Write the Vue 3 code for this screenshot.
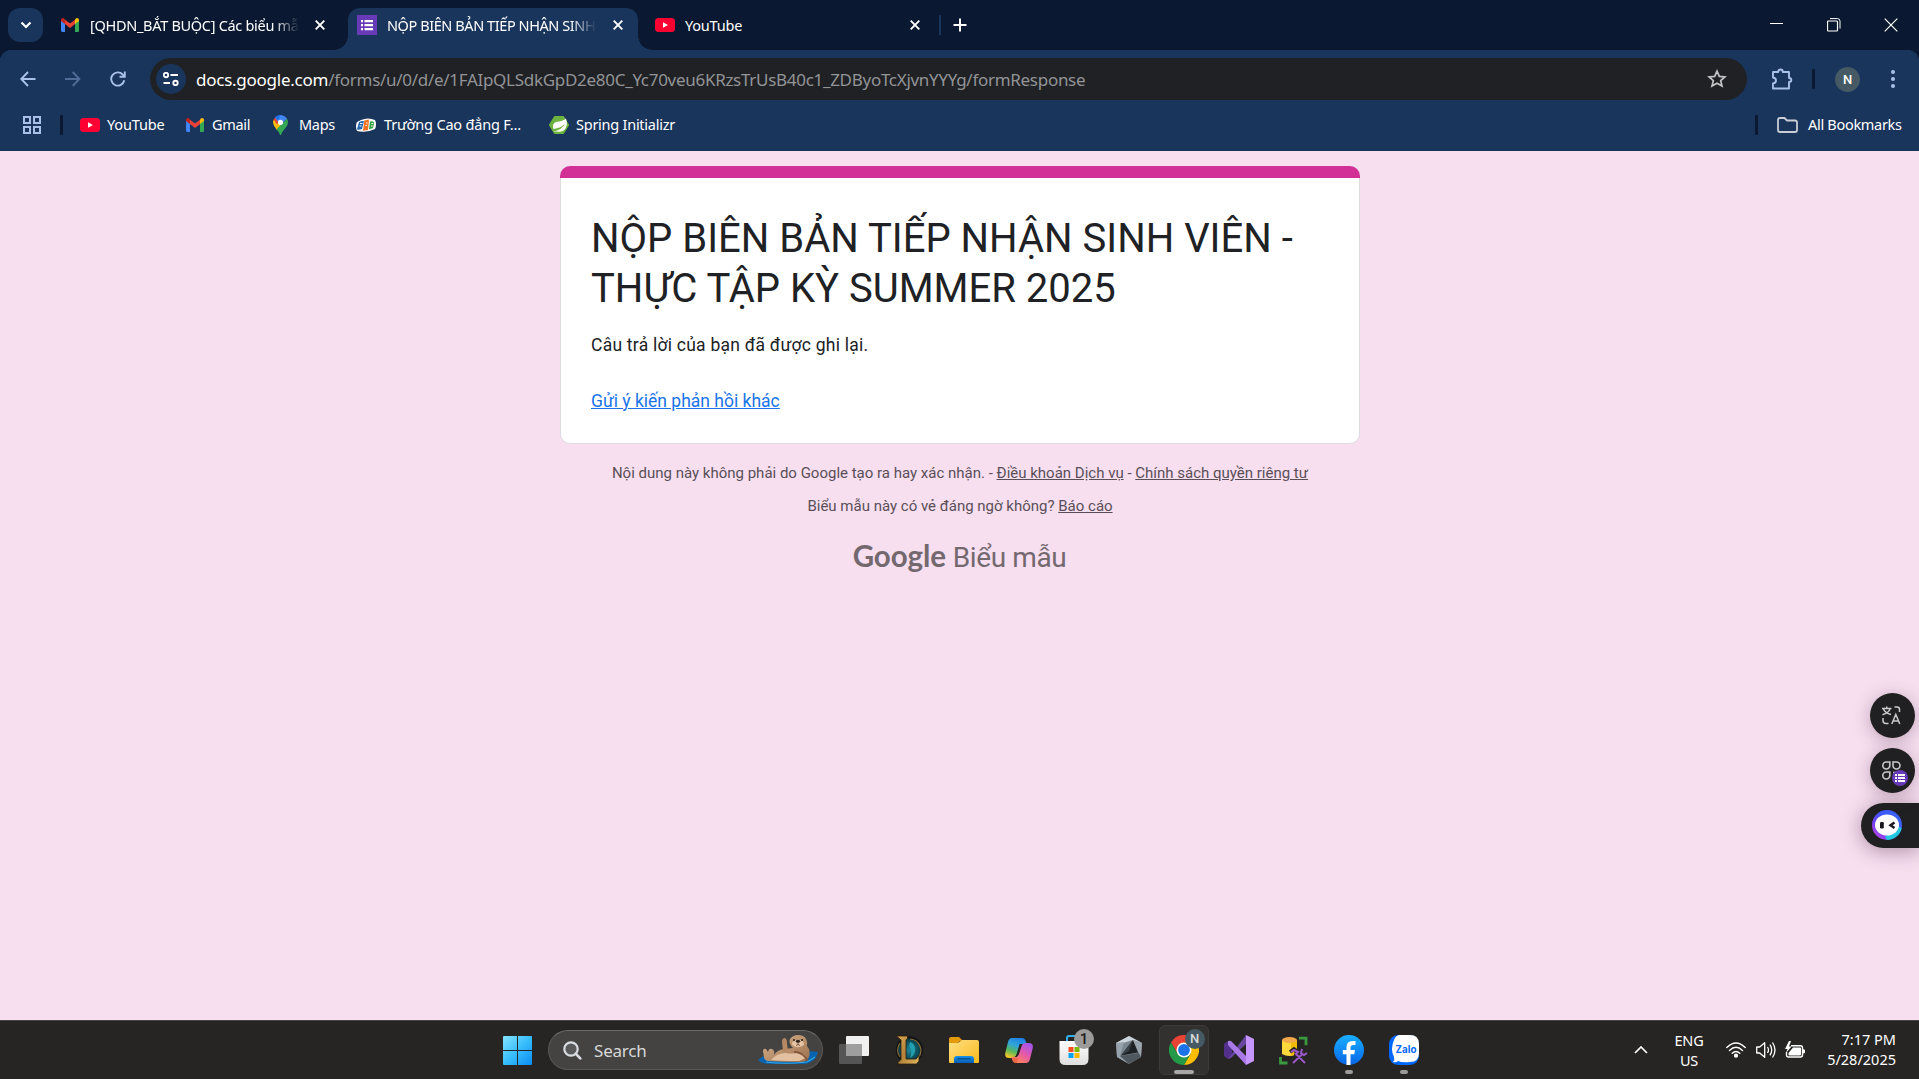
<script setup>
const pinned = ['taskview', 'league', 'folder', 'copilot', 'store', 'cube', 'chrome', 'vs', 'sql', 'facebook', 'zalo']
</script>

<template>
  <div class="screen">
    <!-- shared artwork -->
    <svg class="defs" width="0" height="0" aria-hidden="true">
      <defs>
        <symbol id="gmail" viewBox="0 0 18 14">
          <path d="M0 2v10.600C0 13.400.6 14 1.400 14H4V5.500L9 9.200l5-3.700V14h2.600c.8 0 1.400-.6 1.400-1.400V2L9 5.500z" fill="#4285f4" />
          <path d="M14 5v9h2.600c.8 0 1.400-.6 1.400-1.400V3z" fill="#34a853" />
          <path d="M4 1.700l5 3.800 5-3.800v4.400l-5 3.800-5-3.800z" fill="#ea4335" />
          <path d="M14 1.700v4.400l4-3V2c0-1.800-2-2.600-3.300-1.500z" fill="#fbbc04" />
          <path d="M4 1.700v4.400L0 3.100V2C0 .2 2-.6 3.300.5z" fill="#c5221f" />
        </symbol>
        <symbol id="youtube" viewBox="0 0 20 14">
          <rect width="20" height="14" rx="3.500" fill="#ff0033" />
          <path d="M8 4.200v5.600L12.900 7z" fill="#fff" />
        </symbol>
        <symbol id="forms" viewBox="0 0 20 20">
          <rect width="20" height="20" fill="#673ab7" />
          <path d="M4 5h2v2.200H4zM7.500 5H16v2.200H7.500zM4 9h2v2.200H4zM7.500 9H16v2.200H7.500zM4 13h2v2.200H4zM7.500 13H16v2.200H7.500z" fill="#fff" />
        </symbol>
        <symbol id="close" viewBox="0 0 10 10">
          <path d="M.7.700l8.600 8.600M9.300.700L.7 9.300" stroke="#fff" stroke-width="1.900" fill="none" />
        </symbol>
        <linearGradient id="win" x1="0" y1="0" x2="1" y2="1"><stop offset="0" stop-color="#86e4ff" /><stop offset=".5" stop-color="#38bdfb" /><stop offset="1" stop-color="#0a8df0" /></linearGradient>
        <linearGradient id="ring" x1="0" y1="1" x2="1" y2="0"><stop offset="0" stop-color="#d84bd8" /><stop offset=".3" stop-color="#7b3ff5" /><stop offset=".6" stop-color="#3a5bf6" /><stop offset="1" stop-color="#3f62ff" /></linearGradient>
        <linearGradient id="yellow" x1="0" y1="0" x2="1" y2="1"><stop offset="0" stop-color="#ffe084" /><stop offset="1" stop-color="#f9b91c" /></linearGradient>
        <linearGradient id="blue" x1="0" y1="0" x2="0" y2="1"><stop offset="0" stop-color="#1492e8" /><stop offset="1" stop-color="#0a5cb4" /></linearGradient>
        <linearGradient id="copA" x1=".7" y1="0" x2=".3" y2="1"><stop offset="0" stop-color="#1f7fe8" /><stop offset=".4" stop-color="#2fa4d8" /><stop offset=".7" stop-color="#56b95a" /><stop offset="1" stop-color="#f0c52a" /></linearGradient>
        <linearGradient id="copB" x1=".8" y1="0" x2=".2" y2="1"><stop offset="0" stop-color="#a255f0" /><stop offset=".5" stop-color="#e65aa8" /><stop offset="1" stop-color="#ff8a4c" /></linearGradient>
        <linearGradient id="gold" x1="0" y1="0" x2="1" y2="1"><stop offset="0" stop-color="#d9aa52" /><stop offset=".5" stop-color="#b3823a" /><stop offset="1" stop-color="#e0b65c" /></linearGradient>
        <radialGradient id="orb"><stop offset="0" stop-color="#1e8798" /><stop offset="1" stop-color="#07343f" /></radialGradient>
        <linearGradient id="fb" x1="0" y1="0" x2="0" y2="1"><stop offset="0" stop-color="#19afff" /><stop offset="1" stop-color="#0866e8" /></linearGradient>
        <linearGradient id="fur" x1="0" y1="0" x2="1" y2="1"><stop offset="0" stop-color="#dcb590" /><stop offset="1" stop-color="#9a6e4c" /></linearGradient>
        <linearGradient id="bag" x1="0" y1="0" x2="0" y2="1"><stop offset="0" stop-color="#ffffff" /><stop offset="1" stop-color="#dedede" /></linearGradient>
      </defs>
    </svg>

    <header class="tabs">
      <button class="tabsearch"><svg width="12" height="8" viewBox="0 0 12 8"><path d="M1.500 1.500L6 6l4.500-4.500" fill="none" stroke="#fff" stroke-width="2.200" /></svg></button>
      <div class="tab mail">
        <svg class="fav" width="18" height="14"><use href="#gmail" /></svg>
        <span class="ttl">[QHDN_BẮT BUỘC] Các biểu mẫu</span>
        <svg class="x" width="10" height="10"><use href="#close" /></svg>
      </div>
      <div class="tab active">
        <svg class="fav" width="20" height="20"><use href="#forms" /></svg>
        <span class="ttl">NỘP BIÊN BẢN TIẾP NHẬN SINH VIÊN</span>
        <svg class="x" width="10" height="10"><use href="#close" /></svg>
      </div>
      <div class="tab yt">
        <svg class="fav" width="20" height="14"><use href="#youtube" /></svg>
        <span class="ttl">YouTube</span>
        <svg class="x" width="10" height="10"><use href="#close" /></svg>
      </div>
      <i class="tabdiv"></i>
      <svg class="plus" width="14" height="14" viewBox="0 0 14 14"><path d="M7 .5v13M.5 7h13" stroke="#fff" stroke-width="2" /></svg>
      <div class="winbtns">
        <svg width="14" height="14" viewBox="0 0 14 14"><path d="M0 5.500h13" stroke="#fff" /></svg>
        <svg width="14" height="14" viewBox="0 0 14 14" fill="none" stroke="#fff"><rect x=".5" y="3" width="10" height="10" rx="1" stroke-width="1.200" /><path d="M3 .6h7.500q2.500 0 2.500 2.500v7.500" /></svg>
        <svg width="14" height="14" viewBox="0 0 14 14"><path d="M.7.700l12.600 12.600M13.300.700L.7 13.300" stroke="#fff" stroke-width="1.200" /></svg>
      </div>
    </header>

    <section class="frame">
      <div class="toolbar">
        <svg width="16" height="16" viewBox="0 0 16 16" fill="none" stroke="#a9c1e8" stroke-width="1.900"><path d="M15.500 8H1.500M8 1L1.300 8 8 15" /></svg>
        <svg width="16" height="16" viewBox="0 0 16 16" fill="none" stroke="#4f6b96" stroke-width="1.900"><path d="M0 8h14M7.700 1l6.700 7-6.700 7" /></svg>
        <svg width="17" height="16" viewBox="0 0 17 16" fill="none" stroke="#a9c1e8" stroke-width="1.900"><path d="M14.300 9.300A6.600 6.600 0 1 1 12.700 3.500L14.500 5.300" /><path d="M14.800.5v5.300H9.500" /></svg>
        <div class="omnibox">
          <span class="chip"><svg width="16" height="14" viewBox="0 0 16 14" fill="none" stroke="#fff" stroke-width="1.900"><circle cx="3" cy="3" r="2.200" /><path d="M7.500 3H15M.5 11h6.500" /><circle cx="12.500" cy="11" r="2.200" /></svg></span>
          <span class="url"><b>docs.google.com</b><span class="path">/forms/u/0/d/e/1FAIpQLSdkGpD2e80C_Yc70veu6KRzsTrUsB40c1_ZDByoTcXjvnYYYg/formResponse</span></span>
          <svg class="star" width="20" height="20" viewBox="0 0 20 20"><path d="M10 2.200l2.300 5.200 5.600.500-4.200 3.700 1.300 5.500-5-2.900-5 2.900 1.300-5.500-4.200-3.700 5.600-.500z" fill="none" stroke="#c3c4c6" stroke-width="1.700" /></svg>
        </div>
        <svg class="puzzle" width="22" height="22" viewBox="0 0 22 22"><path d="M2 4h5.200q0-2.500 2.300-2.500T11.800 4H18v6q2.300 0 2.300 2T18 14v6.500H2v-5q3-.3 3-2.900T2 9.500z" fill="none" stroke="#a9c1e8" stroke-width="1.900" stroke-linejoin="round" /></svg>
        <i class="bar"></i>
        <span class="avatar">N</span>
        <svg class="dots" width="4" height="18" viewBox="0 0 4 18" fill="#a9c1e8"><circle cx="2" cy="2" r="2" /><circle cx="2" cy="9" r="2" /><circle cx="2" cy="16" r="2" /></svg>
      </div>
      <div class="bookmarks">
        <svg class="apps" width="18" height="18" viewBox="0 0 18 18" fill="none" stroke="#a9c1e8" stroke-width="2"><path d="M1 1h6v6H1zM11 1h6v6h-6zM1 11h6v6H1zM11 11h6v6h-6z" /></svg>
        <i class="bar"></i>
        <span class="bm b1"><svg width="20" height="14"><use href="#youtube" /></svg><span>YouTube</span></span>
        <span class="bm b2"><svg width="18" height="14"><use href="#gmail" /></svg><span>Gmail</span></span>
        <span class="bm b3"><svg width="15" height="20" viewBox="0 0 15 20"><path d="M1 10.700Q-.8 7 .8 4.400L5 7.500l5 .5-6.200 7z" fill="#fbbc04" /><path d="M3.500 14.400L14 3.500c1.800 4 .8 6.700-1.500 9.500C10 16.200 9 17 8 20H7q-.5-3-3.500-5.600z" fill="#34a853" /><path d="M.7 4.600Q1.200 3.300 2.300 2.200L7 6 4 9.500z" fill="#ea4335" /><path d="M2 2.600Q4 0 7.500 0T14 3.500L7.500 10z" fill="#4285f4" /><path d="M2 2.600Q4 0 7.500 0L5 5z" fill="#1a73e8" /><circle cx="7.500" cy="7.300" r="2.600" fill="#fff" /></svg><span>Maps</span></span>
        <span class="bm b4"><svg width="20" height="14" viewBox="0 0 20 14"><path d="M5 2Q12-1 19 2q2 4 0 9-8 4-18 2-2-5 0-9z" fill="#fff" /><path d="M3 4q3-1.500 5-1l-2 8q-3 1-5 .5z" fill="#2265ad" /><path d="M8.300 2.500L13 1.500 12 12l-5 .8z" fill="#f37021" /><path d="M14 3.500q4-.7 4.200 1.500L17 10q-3 1.500-4 1z" fill="#36a642" /><path d="M4 5.500h2.500M3.500 8h2M10 5h1.500M9.500 7.500H11M15.500 5.500h1.700M15 8h1.500" stroke="#fff" stroke-width="1.200" /></svg><span>Trường Cao đẳng F...</span></span>
        <span class="bm b5"><svg width="20" height="18" viewBox="0 0 20 18"><path d="M5.500.500h9L19.700 9l-5.200 8.500h-9L.300 9z" fill="#6db33f" stroke="#6db33f" stroke-linejoin="round" /><path d="M17 2.500q2 6-.5 10-3 4-8.500 3-3 0-4 0Q13 14 16 7.500q-4 4.500-11.500 5.500Q2.500 8 7 6q7-.8 10-3.500z" fill="#fff" /></svg><span>Spring Initializr</span></span>
        <i class="bar last"></i>
        <span class="bm b6"><svg width="21" height="16" viewBox="0 0 21 16"><path d="M1 3q0-2 2-2h4.500l2.500 2.500h8q2 0 2 2V13q0 2-2 2H3q-2 0-2-2z" fill="none" stroke="#c8cdd6" stroke-width="1.800" /></svg><span>All Bookmarks</span></span>
      </div>
    </section>

    <main class="page">
      <article class="card">
        <h1>NỘP BIÊN BẢN TIẾP NHẬN SINH VIÊN -<br>THỰC TẬP KỲ SUMMER 2025</h1>
        <p>Câu trả lời của bạn đã được ghi lại.</p>
        <a>Gửi ý kiến phản hồi khác</a>
      </article>
      <div class="note">Nội dung này không phải do Google tạo ra hay xác nhận. - <u>Điều khoản Dịch vụ</u> - <u>Chính sách quyền riêng tư</u></div>
      <div class="note second">Biểu mẫu này có vẻ đáng ngờ không? <u>Báo cáo</u></div>
      <div class="brand"><span class="google">Google</span><span class="product">Biểu mẫu</span></div>

      <aside class="float">
        <div class="round"><svg width="19" height="19" viewBox="0 0 19 19" fill="none" stroke="#c9c9cb" stroke-width="1.500"><path d="M0 2.600h9.500M4.700.500v2M1.500 3q1.500 4 7.500 5.500M8 3Q6.500 7 .5 8.700M12.500 1H15q2.500 0 2.500 2.500V6M1 12v2.500Q1 17.500 4 17.500h2.500M9.800 18l4-9.500 4 9.500M11 15h5.500" /></svg></div>
        <div class="round"><svg width="19" height="19" viewBox="0 0 19 19" fill="none" stroke="#c9c9cb" stroke-width="1.600"><path d="M4.300 1h3.500v3.500A3.500 3.500 0 1 1 4.300 1zM11 1h3.500A3.500 3.500 0 1 1 11 4.500zM4.300 11h3.500v3.500A3.500 3.500 0 1 1 4.300 11z" /><path d="M11 11.500h3" /></svg><span class="mini"><svg width="10" height="8" viewBox="0 0 10 8"><path d="M0 1h2M3 1h7M0 4h2M3 4h7M0 7h2M3 7h7" stroke="#fff" stroke-width="2" /></svg></span></div>
        <div class="pill"><svg width="30" height="30" viewBox="0 0 30 30"><circle cx="15" cy="15" r="15" fill="url(#ring)" /><path d="M15 30a15 15 0 0 0 14.700-12L25 16 13 27z" fill="#22c8de" /><ellipse cx="15" cy="15" rx="12" ry="10.500" fill="#fff" /><rect x="8" y="12" width="3.800" height="6.500" rx="1.200" fill="#17181c" /><path d="M22.500 12.500L18.500 15.300l4 2.700" fill="none" stroke="#17181c" stroke-width="2.400" /></svg></div>
      </aside>
    </main>

    <footer class="taskbar">
      <svg class="start" width="29" height="29" viewBox="0 0 29 29" fill="url(#win)"><path d="M0 1Q0 0 1 0h13v14H0zM15 0h13q1 0 1 1v13H15zM0 15h14v14H1q-1 0-1-1zM15 15h14v13q0 1-1 1H15z" /></svg>
      <div class="search">
        <svg width="19" height="19" viewBox="0 0 19 19" fill="none" stroke="#d9dde2" stroke-linecap="round"><circle cx="8" cy="8" r="6.700" stroke-width="2.200" fill="#5a5a5a" /><path d="M12.900 12.900l4.300 4.500" stroke-width="2.700" /></svg>
        <span>Search</span>
        <svg class="otter" width="60" height="30" viewBox="0 0 60 30">
          <path d="M0 25Q5 20 15 19l35-3 10 1q-2 10-13 12H14Q3 29 0 25z" fill="#0864b0" />
          <path d="M8 27q20 2.500 41 0l8-5" fill="none" stroke="#37a7df" stroke-width="1.200" />
          <path d="M35 13Q30 8 32 4q3-4 8-4 6 0 8 4 2 3 1 7 4 5 2 11-2 5-9 5-17 0-32-1-4-1-4-4l-1-6q0-3 3-2l2 3q1-4 4-3 3 1 2 6 3-5 10-6z" fill="url(#fur)" />
          <path d="M25 16l-1-9q0-4 3-4 2 1 2 5l1 9z" fill="#b68863" />
          <path d="M13 25q6-7 15-7 5 1 9 0 10-1 11 5l-7 3q-19 0-28-1z" fill="#e3c0a0" />
          <path d="M36 17q7 0 11 5 2 2 2 4" fill="none" stroke="#83583b" stroke-width="1.800" />
          <ellipse cx="40" cy="8.500" rx="6" ry="3.700" fill="#e5c5a5" /><ellipse cx="40" cy="6.300" rx="2.200" ry="1.500" fill="#30221c" /><circle cx="36" cy="5" r="1" fill="#261c17" /><circle cx="44" cy="5" r="1" fill="#261c17" /><path d="M40 7v2.500l-2 1M40 9.500l2 1" stroke="#5e3e2c" fill="none" stroke-width=".8" />
        </svg>
      </div>
      <div class="pins">
        <div v-for="name in pinned" :key="name" class="pin" :class="name">
          <svg v-if="name === 'taskview'" width="30" height="28" viewBox="0 0 30 28"><rect x="7" width="23" height="20" rx="1" fill="#f0f0f0" /><rect y="8" width="23" height="20" rx="1" fill="#555" /><path d="M7 8h16v12H7z" fill="#9e9e9e" /></svg>
          <svg v-else-if="name === 'league'" width="28" height="30" viewBox="0 0 28 30"><circle cx="14.500" cy="15" r="12.500" fill="url(#orb)" stroke="#121617" stroke-width="2.500" /><path d="M15 4a11.500 11.500 0 0 1 8 19M5 22A11.500 11.500 0 0 1 5 8" fill="none" stroke="#8d6c37" stroke-width="1.200" /><path d="M15 7q6 2 5 9-1 5-5 7 3-7-1-12z" fill="#23a0ae" /><path d="M1.500 1H12.500v2.500L11 5v19h10l3-3.500V26l-2.500 3H3v-1.500l3-3V5z" fill="url(#gold)" stroke="#2b1d0e" stroke-width=".8" /></svg>
          <svg v-else-if="name === 'folder'" width="30" height="28" viewBox="0 0 30 28"><path d="M0 3q0-2 2-2h8l4 4h-3l-3 3H0z" fill="#e39b09" /><path d="M0 7h9l4-3h15q2 0 2 2v20q0 1-1 1H1q-1 0-1-1z" fill="url(#yellow)" /><path d="M5 27v-4q0-3 3-3h14q3 0 3 3v4z" fill="url(#blue)" /><path d="M8.500 22.800h13" stroke="#07477e" stroke-width="1.200" /></svg>
          <svg v-else-if="name === 'copilot'" width="28" height="25" viewBox="0 0 28 25"><path d="M7 0h10q3 0 4 4l1 2h-5q-2 0-3 3l-3 9q-1 2-3 2H4Q-1 20 .5 14L3 4q1-4 4-4z" fill="url(#copA)" /><path d="M21 25H11q-3 0-4-4l-1-2h5q2 0 3-3l3-9q1-2 3-2h4q5 0 3.500 6L25 21q-1 4-4 4z" fill="url(#copB)" /><path d="M14.500 6h3q-2.500 1-3.500 5l-2.500 8H9q2.500-.5 3.500-5z" fill="#252422" /><path d="M7 20h6l-1 5q-4 0-5-5z" fill="#ed6547" /></svg>
          <svg v-else-if="name === 'store'" width="30" height="30" viewBox="0 0 30 30"><path d="M8 8V3q0-2 2-2h10q2 0 2 2v5" fill="none" stroke="#2fb0ed" stroke-width="2" /><path d="M.500 6h29v18q0 6-6 6h-17q-6 0-6-6z" fill="url(#bag)" /><path d="M9.500 12h5v5h-5z" fill="#f25022" /><path d="M15.500 12h5v5h-5z" fill="#7fba00" /><path d="M9.500 18h5v5h-5z" fill="#00a4ef" /><path d="M15.500 18h5v5h-5z" fill="#ffb900" /></svg>
          <svg v-else-if="name === 'cube'" width="26" height="28" viewBox="0 0 26 28"><path d="M13 0l13 7-1 14-12 7-12-7L0 7z" fill="#7c868e" /><path d="M13 0l13 7-9-3-10 3-7 0z" fill="#ccd5dc" /><path d="M0 7l8-1-4 14 9 8-12-7z" fill="#96a3ad" /><path d="M13 28l-9-8 19-3 2 4z" fill="#50585f" /><path d="M17 4l5 12.500L5 19.500z" fill="#1f2225" /><path d="M17 4L13 15 5 19.500z" fill="#3a4148" /><path d="M26 7l-9-3 6 13 2 4z" fill="#9ba4ab" /></svg>
          <svg v-else-if="name === 'chrome'" width="30" height="30" viewBox="0 0 30 30"><path d="M2 7.500A15 15 0 0 1 28 7.500H15L8.500 18.700z" fill="#ea4335" /><path d="M28 7.500A15 15 0 0 1 15 30l6.500-11.300L21 9l-6-1.500z" fill="#fbbc04" /><path d="M15 30A15 15 0 0 1 2 7.500l6.500 11.200L15 22l6.500-3.300z" fill="#249a48" /><circle cx="15" cy="15" r="7.500" fill="#fff" /><circle cx="15" cy="15" r="5.900" fill="#1a73e8" /></svg>
          <svg v-else-if="name === 'vs'" width="30" height="30" viewBox="0 0 30 30"><path d="M0 9l4-3 4 3v12l-4 3-4-3z" fill="#52308c" /><path d="M4 24L22 0v9L9 21q-2 3-5 3z" fill="#68459e" /><path d="M22 0l8 4v22l-8 4z" fill="#c796ff" /><path d="M4 6q3-1 5 2l13 13v9L4 10z" fill="#a979e5" /></svg>
          <svg v-else-if="name === 'sql'" width="29" height="29" viewBox="0 0 29 29"><path d="M3 4v14q7 4 15 0V4z" fill="#ffd83c" /><path d="M12 5l6-1v14l-6 2z" fill="#f3bb00" /><ellipse cx="10.500" cy="4" rx="7.500" ry="3" fill="#f2a94b" /><path d="M20 2.200h7v7M1.500 21v6h7" fill="none" stroke="#3b993f" stroke-width="2.800" /><path d="M11 16l4-3 4 3-3 2M16 17l9 10M14 27L24 17" fill="none" stroke="#252422" stroke-width="3.500" /><path d="M12 16l3-2 4 2-3 2.500M17 18l9 9M14 27L23 18.500M23 13l-1 4 3 2 3-2" fill="none" stroke="#9c57c8" stroke-width="2" /></svg>
          <svg v-else-if="name === 'facebook'" width="30" height="30" viewBox="0 0 30 30"><circle cx="15" cy="15" r="15" fill="url(#fb)" /><path d="M12.500 30V19.300H8.800V15h3.700v-3q0-6 6-6h3v4h-2q-3 0-3 2.800V15H21l-.7 4.300h-3.800V30z" fill="#fff" /></svg>
          <svg v-else width="30" height="30" viewBox="0 0 30 30"><rect width="30" height="30" rx="9" fill="#0068ff" /><path d="M11 0h10q9 0 9 9v9q0 9-9 9-8 1-12-1-2 2-5 1 2-2 1-5-4-8 0-17 2-5 6-5z" fill="#fff" /><text x="17" y="17.500" text-anchor="middle" font-family="Inter, sans-serif" font-size="9.800" font-weight="700" fill="#0068ff">Zalo</text></svg>
          <span v-if="name === 'store'" class="badge grey">1</span>
          <span v-if="name === 'chrome'" class="badge slate">N</span>
        </div>
      </div>
      <div class="tray">
        <svg class="up" width="14" height="8" viewBox="0 0 14 8"><path d="M1 7l6-6 6 6" fill="none" stroke="#fff" stroke-width="1.700" /></svg>
        <div class="lang"><span>ENG</span><span>US</span></div>
        <svg class="wifi" width="20" height="16" viewBox="0 0 20 16" fill="none" stroke="#fff" stroke-width="1.400" stroke-linecap="round"><path d="M.8 5.500Q10-3.500 19.200 5.500M3.500 8.500q6.500-6.300 13 0M6.200 11.200q3.800-3.600 7.600 0" /><circle cx="10" cy="13.700" r="1.400" fill="#fff" /></svg>
        <svg class="vol" width="20" height="18" viewBox="0 0 20 18" fill="none" stroke="#fff" stroke-width="1.300" stroke-linejoin="round"><path d="M.7 6v6h3l5 4.300V1.700L3.700 6zM11.500 6q2 3 0 6M14 3.700q3.500 5.300 0 10.600M16.500 1.500q5 7.500 0 15" /></svg>
        <svg class="bat" width="20" height="18" viewBox="0 0 20 18"><path d="M6 4.700h9.500q2 0 2 2V14q0 2-2 2h-12q-2 0-2-2v-3" fill="none" stroke="#fff" stroke-width="1.400" /><path d="M8 6.500h7q1 0 1 1v6q0 1-1 1H4.500q-1 0-1-1V12zM18 8.200q2 0 2 1v2.300q0 1-2 1z" fill="#fff" /><path d="M4 0L0 8h2.500L1 12l5.500-6.500H4L6 0z" fill="#fff" /></svg>
        <div class="clock"><span>7:17 PM</span><span class="date">5/28/2025</span></div>
      </div>
    </footer>
  </div>
</template>

<style>
html, body { margin: 0; overflow: hidden; }
</style>

<style scoped>
* { box-sizing: border-box; }
svg { display: block; flex: none; }
.defs { position: absolute; }
.screen { width: 1919px; height: 1079px; display: flex; flex-direction: column; background: #f7dff0; font-family: "Segoe UI", "Noto Sans", "Open Sans", sans-serif; overflow: hidden; }

.tabs { height: 50px; flex: none; display: flex; background: #0a1931; color: #fff; }
.tabsearch { width: 35px; height: 34px; margin: 8px 0 0 8px; padding: 0; border: 0; border-radius: 12px; background: #1a355c; display: flex; align-items: center; justify-content: center; }
.tab { height: 50px; display: flex; align-items: center; position: relative; }
.tab .x { margin-left: auto; }
.ttl { font-size: 14.500px; line-height: 24px; overflow: hidden; white-space: nowrap; }
.mail { width: 305px; padding: 0 23px 0 18px; }
.mail .ttl { width: 209px; margin-left: 11px; letter-spacing: -.3px; mask-image: linear-gradient(90deg, #000 88%, transparent 100%); }
.active { width: 290px; height: 42px; margin-top: 8px; padding: 0 15px 8px 9px; background: #1a355c; border-radius: 12px 12px 0 0; }
.active .ttl { width: 209px; margin-left: 10px; letter-spacing: -.42px; mask-image: linear-gradient(90deg, #000 88%, transparent 100%); }
.active::before, .active::after { content: ""; position: absolute; bottom: 0; width: 14px; height: 14px; }
.active::before { left: -14px; background: radial-gradient(circle at 0 0, transparent 13.500px, #1a355c 14px); }
.active::after { right: -14px; background: radial-gradient(circle at 100% 0, transparent 13.500px, #1a355c 14px); }
.yt { width: 301px; padding: 0 19px 0 17px; }
.yt .ttl { margin-left: 10px; letter-spacing: -.2px; }
.tabdiv { width: 2px; height: 20px; margin-top: 15px; background: #1a355c; }
.plus { margin: 18px 0 0 12px; }
.winbtns { margin: 18px 21px 0 auto; display: flex; gap: 43px; }

.frame { height: 101px; flex: none; color: #fff; background: radial-gradient(circle at 12px 12px, #1a355c 12px, #0a1931 12.500px) 0 0 / 12px 12px no-repeat, radial-gradient(circle at 0 12px, #1a355c 12px, #0a1931 12.500px) 100% 0 / 12px 12px no-repeat, #1a355c; }
.toolbar { height: 58px; display: flex; align-items: center; padding-left: 20px; }
.toolbar > svg:nth-child(2) { margin-left: 29px; }
.toolbar > svg:nth-child(3) { margin-left: 29px; }
.omnibox { width: 1597px; height: 42px; margin-left: 23px; padding: 0 20px 0 6px; border-radius: 21px; background: #202124; display: flex; align-items: center; }
.chip { width: 30px; height: 30px; border-radius: 50%; background: #1a355c; display: flex; align-items: center; justify-content: center; }
.url { margin-left: 10px; margin-top: 1px; font-size: 17px; line-height: 26px; white-space: nowrap; color: #929497; }
.url b { font-weight: 400; color: #fff; letter-spacing: -.25px; }
.path { letter-spacing: -.29px; }
.star { margin-left: auto; }
.puzzle { margin-left: 24px; }
.bar { width: 3px; height: 20px; border-radius: 1px; background: #0a1931; }
.toolbar .bar { margin-left: 19px; }
.avatar { width: 25px; height: 25px; margin-left: 20px; border-radius: 50%; background: #455a64; font: 500 13px/25px Roboto, sans-serif; text-align: center; }
.dots { margin-left: 31px; }
.bookmarks { height: 34px; display: flex; align-items: center; padding-left: 23px; font-size: 14.500px; }
.bookmarks .bar { margin-left: 19px; }
.bm { display: flex; align-items: center; gap: 8px; white-space: nowrap; }
.bm > span { margin-bottom: 2px; }
.b1 { width: 106px; margin-left: 17px; gap: 7px; letter-spacing: -.15px; }
.b2 { width: 87px; letter-spacing: -.3px; }
.b3 { width: 83px; gap: 11px; letter-spacing: -.3px; }
.b4 { width: 193px; letter-spacing: -.18px; }
.b5 { gap: 7px; letter-spacing: -.25px; }
.bookmarks .last { margin-left: auto; }
.b6 { width: 127px; margin: 0 15px 0 19px; gap: 10px; letter-spacing: -.3px; }

.page { flex: 1; padding-top: 15px; display: flex; flex-direction: column; align-items: center; position: relative; font-family: Roboto, sans-serif; }
.card { width: 800px; height: 278px; padding: 47px 30px 0; margin-left: 1px; border: 1px solid #dadce0; border-radius: 10px; background: #fff; color: #202124; position: relative; }
.card::before { content: ""; position: absolute; top: -1px; left: -1px; right: -1px; height: 12px; border-radius: 10px 10px 0 0; background: #d33097; }
h1 { margin: 0; font-size: 40px; line-height: 50px; font-weight: 400; white-space: nowrap; }
.card p { margin: 19px 0 0; font-size: 17.500px; line-height: 25px; letter-spacing: .24px; }
.card a { display: block; margin-top: 31px; font-size: 17.500px; line-height: 25px; color: #1a73e8; text-decoration: underline; }
.note { margin: 19px 0 0 1px; font-size: 15px; line-height: 20px; color: #5a4f58; white-space: nowrap; }
.second { margin-top: 13px; }
.brand { height: 40px; margin-top: 20px; display: flex; align-items: baseline; color: #74686f; line-height: 40px; white-space: nowrap; }
.google { font: 700 29.500px/40px Lato, sans-serif; letter-spacing: -.1px; }
.product { margin-left: 7px; font-size: 28px; letter-spacing: -.4px; }

.float { position: absolute; right: 0; top: 542px; display: flex; flex-direction: column; align-items: flex-end; gap: 10px; }
.round { width: 45px; height: 45px; margin-right: 4px; border-radius: 50%; background: #202022; display: flex; align-items: center; justify-content: center; position: relative; box-shadow: 0 3px 18px rgba(60, 20, 50, .3); }
.round > svg { margin-right: 2px; }
.mini { position: absolute; right: 7px; bottom: 7px; width: 16px; height: 16px; border-radius: 50%; background: #673ab7; display: flex; align-items: center; justify-content: center; }
.pill { width: 58px; height: 45px; padding: 0 0 1px 11px; border-radius: 23px 0 0 23px; background: #202022; display: flex; align-items: center; box-shadow: 0 3px 20px rgba(60, 20, 50, .4); }

.taskbar { height: 59px; flex: none; border-top: 1px solid #474545; background: #262524; display: flex; align-items: center; color: #fff; }
.start { margin-left: 503px; }
.search { width: 275px; height: 40px; margin-left: 16px; padding: 0 4px 0 14px; border: 1px solid #595857; border-top-color: #6c6b6a; border-radius: 20px; background: #444342; display: flex; align-items: center; color: #d8d8d8; }
.search span { margin-left: 12px; font-size: 17px; letter-spacing: -.2px; }
.otter { margin-left: auto; }
.pins { display: flex; margin-left: 3px; }
.pin { width: 55px; height: 50px; display: flex; align-items: center; justify-content: center; position: relative; }
.chrome { width: 50px; margin: 0 2.500px; background: #323130; border: 1px solid #3c3b3a; border-radius: 6px; }
.chrome::after, .facebook::after, .zalo::after { content: ""; position: absolute; bottom: 1px; width: 8px; height: 4px; border-radius: 2px; background: #9b9a99; }
.chrome::after { width: 20px; bottom: 0; background: #a8a7a6; }
.badge { position: absolute; width: 20px; height: 20px; top: 4px; border-radius: 50%; font: 500 13px/20px Roboto, sans-serif; text-align: center; }
.grey { left: 28px; background: #9d9b99; color: #1d1c1b; font-size: 15px; }
.slate { top: 3px; left: 25px; background: #455a64; color: #d8dcdf; }
.tray { margin-left: auto; margin-right: 23px; display: flex; align-items: center; font-size: 14.500px; line-height: 20px; }
.lang, .clock { display: flex; flex-direction: column; align-items: center; letter-spacing: -.2px; margin-bottom: 1px; }
.lang { width: 28px; margin: 0 23px 0 27px; }
.vol { margin-left: 10px; }
.bat { margin-left: 9px; }
.clock { width: 70px; margin-left: 21px; align-items: flex-end; white-space: nowrap; letter-spacing: 0; margin-bottom: 2px; }
</style>
